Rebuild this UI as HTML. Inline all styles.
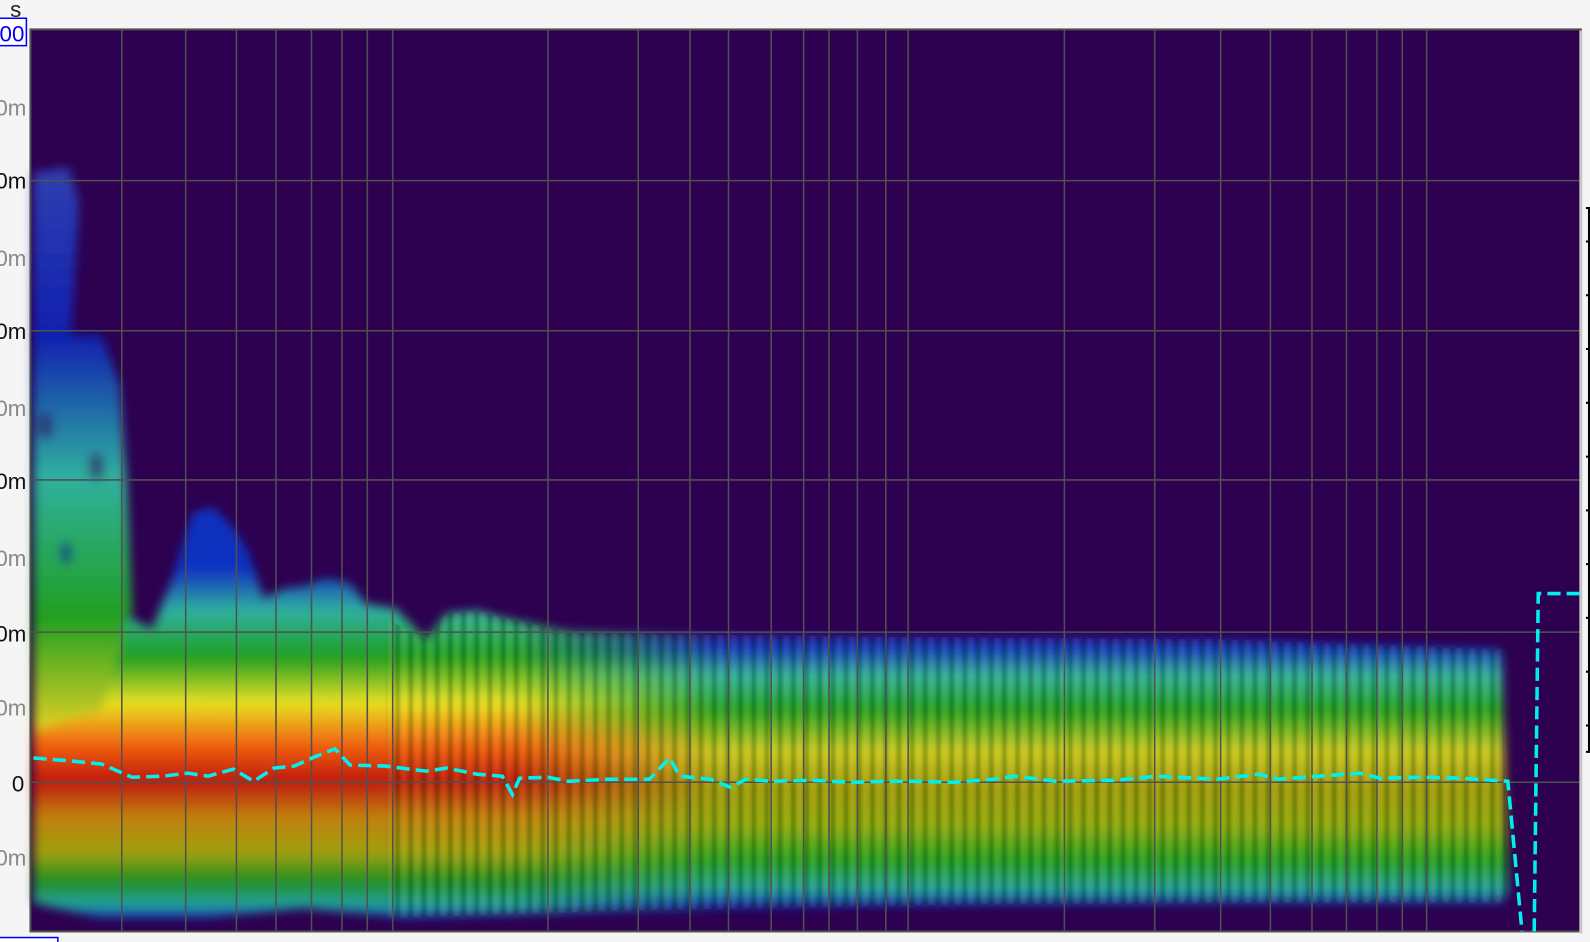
<!DOCTYPE html>
<html><head><meta charset="utf-8"><style>
html,body{margin:0;padding:0;background:#f5f5f5;overflow:hidden}
svg{display:block}
text{font-family:"Liberation Sans",sans-serif}
</style></head><body>
<svg width="1590" height="942" viewBox="0 0 1567 928.4" preserveAspectRatio="none">
<defs>
<linearGradient id="gR" gradientUnits="userSpaceOnUse" x1="0" y1="620" x2="0" y2="905">
<stop offset="0" stop-color="#3a1a9a"/>
<stop offset="0.06" stop-color="#1030c0"/>
<stop offset="0.16" stop-color="#30b0a0"/>
<stop offset="0.28" stop-color="#20a020"/>
<stop offset="0.42" stop-color="#c8c820"/>
<stop offset="0.55" stop-color="#a09a10"/>
<stop offset="0.68" stop-color="#90a810"/>
<stop offset="0.8" stop-color="#20a020"/>
<stop offset="0.9" stop-color="#20a0a0"/>
<stop offset="0.96" stop-color="#1020b0"/>
<stop offset="1" stop-color="#2e0050"/>
</linearGradient>
<linearGradient id="gL" gradientUnits="userSpaceOnUse" x1="0" y1="560" x2="0" y2="910">
<stop offset="0" stop-color="#1030c0"/>
<stop offset="0.12" stop-color="#30b0a0"/>
<stop offset="0.25" stop-color="#20a020"/>
<stop offset="0.38" stop-color="#e8e020"/>
<stop offset="0.5" stop-color="#f06010"/>
<stop offset="0.6" stop-color="#c01808"/>
<stop offset="0.7" stop-color="#c08010"/>
<stop offset="0.8" stop-color="#a0a010"/>
<stop offset="0.88" stop-color="#209020"/>
<stop offset="0.95" stop-color="#20a0a0"/>
<stop offset="0.99" stop-color="#1020b0"/>
<stop offset="1" stop-color="#2e0050"/>
</linearGradient>
<linearGradient id="gT" gradientUnits="userSpaceOnUse" x1="0" y1="165" x2="0" y2="720">
<stop offset="0" stop-color="#3040b0"/>
<stop offset="0.3" stop-color="#1020b0"/>
<stop offset="0.55" stop-color="#30b0a0"/>
<stop offset="0.8" stop-color="#20a020"/>
<stop offset="1" stop-color="#e0d020"/>
</linearGradient>
<linearGradient id="fade" gradientUnits="userSpaceOnUse" x1="30" y1="0" x2="710" y2="0">
<stop offset="0" stop-color="#fff"/><stop offset="0.7" stop-color="#fff"/><stop offset="1" stop-color="#000"/>
</linearGradient>
<mask id="m"><rect x="30" y="0" width="680" height="930" fill="url(#fade)"/></mask>
<filter id="b" x="-5%" y="-5%" width="110%" height="110%"><feGaussianBlur stdDeviation="5"/></filter>
<filter id="b2"><feGaussianBlur stdDeviation="1.5"/></filter>
<pattern id="st" width="13" height="10" patternUnits="userSpaceOnUse">
<rect x="0" y="0" width="4" height="10" fill="#003000" opacity="0.3"/>
<rect x="7" y="0" width="2" height="10" fill="#fff080" opacity="0.18"/>
</pattern>
<clipPath id="cp"><path d="M380,610 L420,630 L440,605 L470,602 L500,610 L560,622 L650,625 L900,628 L1200,630 L1480,640 L1486,880 L1480,890 L1200,890 L900,892 L600,898 L380,905 Z"/></clipPath>
</defs>
<rect x="30" y="29" width="1528" height="889" fill="#2e0050"/>
<g filter="url(#b)">
<path d="M33,900 L33,480 L60,470 L80,500 L110,560 L130,610 L150,620 L170,570 L190,505 L210,500 L230,520 L245,545 L260,590 L280,580 L300,578 L320,570 L345,575 L360,595 L390,600 L420,630 L440,605 L470,602 L500,610 L560,622 L650,625 L900,628 L1200,630 L1480,640 L1486,880 L1480,890 L1200,890 L900,892 L600,898 L400,905 L300,895 L200,905 L100,905 L33,890 Z" fill="url(#gR)"/>
<path mask="url(#m)" d="M33,900 L33,480 L60,470 L80,500 L110,560 L130,610 L150,620 L170,570 L190,505 L210,500 L230,520 L245,545 L260,590 L280,580 L300,578 L320,570 L345,575 L360,595 L390,600 L420,630 L440,605 L470,602 L500,610 L560,622 L650,625 L710,628 L710,898 L600,898 L400,905 L300,895 L200,905 L100,905 L33,890 Z" fill="url(#gL)"/>
<path d="M33,480 L33,170 L68,165 L78,200 L70,330 L100,330 L118,380 L125,480 L130,600 L100,700 L33,720 Z" fill="url(#gT)"/>
<ellipse cx="45" cy="420" rx="8" ry="14" fill="#2e0050" opacity="0.5"/>
<ellipse cx="95" cy="460" rx="8" ry="14" fill="#2e0050" opacity="0.5"/>
<ellipse cx="65" cy="545" rx="6" ry="12" fill="#102090" opacity="0.6"/>
</g>
<g clip-path="url(#cp)"><rect x="380" y="600" width="1106" height="310" fill="url(#st)" filter="url(#b2)"/></g>
<g stroke="#505050" stroke-width="1.5" fill="none">
<path d="M120,29V918M183,29V918M233,29V918M272,29V918M307,29V918M337,29V918M362,29V918M387,29V918M540,29V918M629,29V918M680,29V918M718,29V918M760,29V918M792,29V918M817,29V918M845,29V918M873,29V918M895,29V918M1049,29V918M1138,29V918M1203,29V918M1252,29V918M1293,29V918M1327,29V918M1357,29V918M1382,29V918M1406,29V918"/>
<path d="M30,178H1558M30,326H1558M30,473H1558M30,623H1558M30,771H1558"/>
<rect x="30" y="29" width="1528" height="889" stroke-width="2"/>
</g>
<line x1="1558" y1="30" x2="1558" y2="920" stroke="#c8c8c8" stroke-width="3"/>
<g stroke="#00f0f0" stroke-width="3.5" fill="none" stroke-dasharray="13,6">
<path d="M33,747 L70,750 L100,753 L130,766 L160,765 L185,762 L205,765 L230,758 L250,770 L270,757 L290,755 L310,746 L330,738 L345,754 L380,755 L420,760 L440,757 L470,763 L495,765 L505,783 L512,767 L540,766 L560,770 L600,768 L640,768 L660,747 L670,765 L700,768 L720,776 L735,768 L760,770 L800,769 L840,771 L870,770 L900,770 L940,771 L980,768 L1000,765 L1040,770 L1100,769 L1140,765 L1200,768 L1240,763 L1260,768 L1300,765 L1340,762 L1360,767 L1400,766 L1440,767 L1486,770 L1500,918"/>
<path d="M1512,918 L1516,585 L1558,585"/>
</g>
<g stroke="#000" stroke-width="2" fill="none"><path d="M1566,205V741M1563,205H1567M1563,238H1567M1563,291H1567M1563,344H1567M1563,397H1567M1563,450H1567M1563,503H1567M1563,556H1567M1563,609H1567M1563,662H1567M1563,715H1567M1563,741H1567"/></g>
<text x="10" y="17" font-size="22" fill="#222">s</text>
<rect x="-5" y="18" width="31" height="27" fill="#fff" stroke="#00f" stroke-width="1.5"/>
<text x="24" y="41" font-size="22" fill="#00f" text-anchor="end">00</text>
<g font-size="22" text-anchor="end">
<text x="26" y="114" fill="#888">0m</text>
<text x="26" y="186" fill="#111">0m</text>
<text x="26" y="262" fill="#888">0m</text>
<text x="26" y="334" fill="#111">0m</text>
<text x="26" y="410" fill="#888">0m</text>
<text x="26" y="482" fill="#111">0m</text>
<text x="26" y="558" fill="#888">0m</text>
<text x="26" y="632" fill="#111">0m</text>
<text x="26" y="705" fill="#888">0m</text>
<text x="24" y="780" fill="#111">0</text>
<text x="26" y="853" fill="#888">0m</text>
</g>
<rect x="-5" y="924" width="62" height="10" fill="#fff" stroke="#00f" stroke-width="1.5"/>
</svg>
</body></html>
